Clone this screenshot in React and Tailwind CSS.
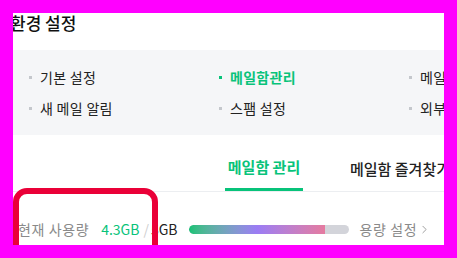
import { ChevronRight } from "lucide-react";

// settings menu columns
const menu = [
  [
    { label: "기본 설정" },
    { label: "새 메일 알림" },
  ],
  [
    { label: "메일함관리", active: true },
    { label: "스팸 설정" },
  ],
  [
    { label: "메일 보내기" },
    { label: "외부 메일 가져오기" },
  ],
];

const MenuItem = ({ label, active }) => (
  <div className="flex h-[31px] items-center whitespace-nowrap">
    <span
      className={`mr-[8px] h-[3px] w-[3px] ${active ? "bg-[#08c37a]" : "bg-[#c4c7cc]"}`}
    ></span>
    <span
      className={`text-[14px] tracking-[0.3px] ${active ? "font-semibold text-[#08c37a]" : "text-[#222]"}`}
    >
      {label}
    </span>
  </div>
);

export default function App() {
  return (
    <div
      className="h-[258px] w-[457px] bg-[#ff00ff] p-[13px]"
      style={{ fontFamily: '"Noto Sans CJK KR", "Noto Sans", sans-serif' }}
    >
      <div className="relative flex h-full w-full flex-col overflow-hidden bg-white">
        {/* Title */}
        <div className="h-[37px]">
          <h1 className="-ml-[3px] whitespace-nowrap text-[17px] font-medium leading-[20px] text-[#111]">
            환경 설정
          </h1>
        </div>

        {/* Menu */}
        <div className="flex h-[85px] bg-[#f5f6f8] pl-[16px] pt-[12px]">
          {menu.map((col, i) => (
            <div key={i} className="w-[190px] shrink-0">
              {col.map((item) => (
                <MenuItem key={item.label} {...item} />
              ))}
            </div>
          ))}
        </div>

        {/* Tabs */}
        <div className="flex h-[57px] shrink-0 items-end border-b border-[#eceef1] pl-[212px]">
          <div className="flex h-full w-[78px] shrink-0 items-center justify-center border-b-[3px] border-[#08c37a] pt-[12px]">
            <span className="whitespace-nowrap text-[15px] font-semibold text-[#08c37a]">
              메일함 관리
            </span>
          </div>
          <div className="ml-[47px] flex h-full items-center pt-[12px]">
            <span className="whitespace-nowrap text-[15px] font-medium text-[#222]">
              메일함 즐겨찾기
            </span>
          </div>
        </div>

        {/* Storage */}
        <div className="flex items-center whitespace-nowrap pl-[5px] pt-[27px] text-[14px]">
          <span className="tracking-[0.6px] text-[#8a8a8a]">현재 사용량</span>
          <span className="ml-[12px] text-[#08c37a]">4.3GB</span>
          <span className="ml-[4px] text-[#cfcfcf]">/</span>
          <span className="ml-[2px] text-[#222]">5GB</span>
          <div className="ml-[11px] flex h-[9px] w-[160px] overflow-hidden rounded-full bg-[#d3d4da]">
            <div className="h-full w-[136px] rounded-l-full bg-linear-to-r from-[#0cc275] via-[#9b7cf4] to-[#e57a9f]"></div>
          </div>
          <span className="ml-[11px] flex items-center tracking-[0.6px] text-[#8a8a8a]">
            용량 설정
            <ChevronRight className="ml-[1px] h-[13px] w-[13px]" strokeWidth={1.5} />
          </span>
        </div>

        {/* highlight box drawn over the screenshot */}
        <div className="absolute left-0 top-[175px] h-[120px] w-[145px] rounded-[14px] border-[6px] border-[#ea0038]"></div>
      </div>
    </div>
  );
}
